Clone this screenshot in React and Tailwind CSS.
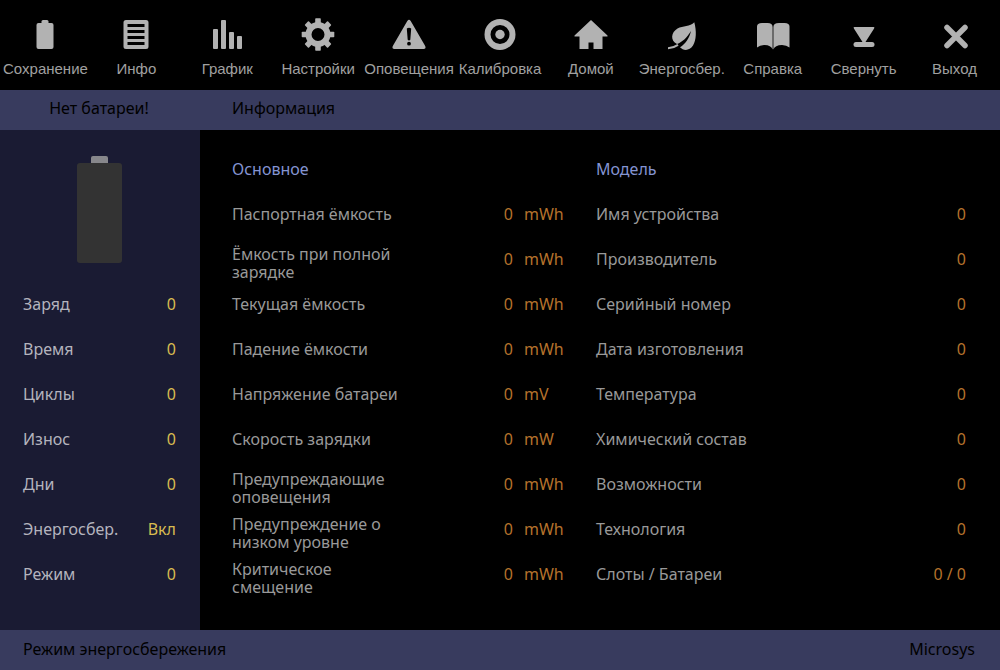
import React from 'react';
import { clsx } from 'clsx';

const icons = {
  battery: (
    <>
      <rect x="9.500" y="5" width="17" height="26" rx="2" />
      <rect x="14.500" y="2" width="7" height="5" rx="1.500" />
    </>
  ),
  info: (
    <path
      fillRule="evenodd"
      d="M8 2h20q2.500 0 2.500 2.500v24q0 2.500-2.500 2.500H8q-2.500 0-2.500-2.500v-24Q5.500 2 8 2zM9.500 6v3h17V6zM9.500 12v3h17v-3zM9.500 18v3h17v-3zM9.500 24v3h17v-3z"
    />
  ),
  chart: (
    <>
      <rect x="4" y="11" width="5" height="20" rx="1" />
      <rect x="12" y="2" width="5" height="29" rx="1" />
      <rect x="20" y="14" width="5" height="17" rx="1" />
      <rect x="28" y="18" width="5" height="13" rx="1" />
    </>
  ),
  gear: (
    <>
      <circle cx="18" cy="16.500" r="9.500" fill="none" stroke="currentColor" strokeWidth="6" />
      {[0, 45, 90, 135].map((angle) => (
        <g key={angle} transform={`rotate(${angle} 18 16.5)`}>
          <rect x="15.200" y="0.200" width="5.600" height="6" rx="0.800" />
          <rect x="15.200" y="26.800" width="5.600" height="6" rx="0.800" />
        </g>
      ))}
    </>
  ),
  alert: (
    <path
      fillRule="evenodd"
      d="M16.3 3q1.7-2.4 3.4 0L34.2 28q1.2 3-1.7 3h-29q-2.9 0-1.7-3zM15.800 10.600l.9 11.200q1.300 1.400 2.600 0l.9-11.200q-2.200-1.800-4.400 0zM18 23.800a1.900 1.900 0 1 0 0 3.800 1.900 1.900 0 1 0 0-3.800z"
    />
  ),
  target: (
    <>
      <circle cx="18" cy="16.500" r="12.500" fill="none" stroke="currentColor" strokeWidth="6" />
      <circle cx="18" cy="16.500" r="4.700" />
    </>
  ),
  home: <path d="M18 2l16.500 15.500v1h-5V31h-9v-6.500h-5V31h-9V18.500h-5v-1z" />,
  leaf: (
    <>
      <path d="M30.300 4.300C32.600 13 32.400 22 29 27.500 25.500 33 19.500 33 16 29.300 21.500 26 25.500 20 27 13 22.500 20 18.500 24 13 26 6 22.500 7 14.500 13.500 10.500 19 7.500 26 9 30.300 4.300z" />
      <path d="M4 30.200Q9 30.200 14 26.800" fill="none" stroke="currentColor" strokeWidth="2" />
    </>
  ),
  book: (
    <>
      <path d="M2 8.500Q2 5 7 5h5.500q5.100 0 5.100 4v22.500Q16 27 9.500 27 5 27 2 29.500z" />
      <path d="M34.500 8.500Q34.500 5 29.500 5H24q-5.600 0-5.600 4v22.500Q20 27 27 27q4.500 0 7.500 2.500z" />
    </>
  ),
  minimize: (
    <>
      <path d="M8.500 9h19q1.500 0 .6 1.400L19.500 24h-3L7.900 10.400Q7 9 8.500 9z" />
      <rect x="7.500" y="24" width="21" height="5" rx="2.500" />
    </>
  ),
  close: (
    <path d="M10 9.500l18 18M28 9.500l-18 18" fill="none" stroke="currentColor" strokeWidth="5.500" strokeLinecap="round" />
  ),
};

const toolbar = [
  { icon: 'battery', label: 'Сохранение' },
  { icon: 'info', label: 'Инфо' },
  { icon: 'chart', label: 'График' },
  { icon: 'gear', label: 'Настройки' },
  { icon: 'alert', label: 'Оповещения' },
  { icon: 'target', label: 'Калибровка' },
  { icon: 'home', label: 'Домой' },
  { icon: 'leaf', label: 'Энергосбер.' },
  { icon: 'book', label: 'Справка' },
  { icon: 'minimize', label: 'Свернуть' },
  { icon: 'close', label: 'Выход' },
];

const status = [
  ['Заряд', '0'],
  ['Время', '0'],
  ['Циклы', '0'],
  ['Износ', '0'],
  ['Дни', '0'],
  ['Энергосбер.', 'Вкл'],
  ['Режим', '0'],
];

const general = [
  ['Паспортная ёмкость', '0', 'mWh'],
  ['Ёмкость при полной зарядке', '0', 'mWh'],
  ['Текущая ёмкость', '0', 'mWh'],
  ['Падение ёмкости', '0', 'mWh'],
  ['Напряжение батареи', '0', 'mV'],
  ['Скорость зарядки', '0', 'mW'],
  ['Предупреждающие оповещения', '0', 'mWh'],
  ['Предупреждение о низком уровне', '0', 'mWh'],
  ['Критическое смещение', '0', 'mWh'],
];

const model = [
  ['Имя устройства', '0'],
  ['Производитель', '0'],
  ['Серийный номер', '0'],
  ['Дата изготовления', '0'],
  ['Температура', '0'],
  ['Химический состав', '0'],
  ['Возможности', '0'],
  ['Технология', '0'],
  ['Слоты / Батареи', '0 / 0'],
];

function ToolButton({ icon, label }) {
  return (
    <button className="flex flex-col items-center pt-[18px] text-[#b2b2b2]">
      <svg viewBox="0 0 36 36" className="h-9 w-9" fill="currentColor" aria-hidden="true">
        {icons[icon]}
      </svg>
      <span className="mt-1.5 font-['Liberation_Sans',Arial,sans-serif] text-[15px] leading-[18px] whitespace-nowrap text-[#a0a0a0]">
        {label}
      </span>
    </button>
  );
}

function Sidebar() {
  return (
    <aside className="w-[200px] shrink-0 bg-[#1a1b33] pt-[26px]">
      <div className="flex flex-col items-center pr-px">
        <div className="h-[7px] w-[17px] rounded-t-xs bg-[#87878b]" />
        <div className="h-[100px] w-[45px] rounded-[3px] bg-[#333333]" />
      </div>
      <table className="mt-[18px] w-full">
        <tbody>
          {status.map(([name, value]) => (
            <tr key={name} className="h-[45px]">
              <th scope="row" className="p-0 pl-[23px] text-left font-normal text-[#b4b4be]">
                {name}
              </th>
              <td className="p-0 pr-6 text-right text-[#d8bc50]">{value}</td>
            </tr>
          ))}
        </tbody>
      </table>
    </aside>
  );
}

function InfoTable({ title, rows }) {
  return (
    <table className="w-full">
      <caption className="h-[45px] pt-0.5 text-left leading-[43px] text-[#8494d2]">{title}</caption>
      <tbody>
        {rows.map(([name, value, unit]) => (
          <tr key={name} className="h-[45px]">
            {/* names over 18 letters take two lines, which sit lower in the row */}
            <th
              scope="row"
              className={clsx('w-[172px] p-0 text-left font-normal text-[#999999]', name.length > 18 && 'pt-2')}
            >
              {name}
            </th>
            <td className="p-0 text-right text-[#b5722c]">{value}</td>
            {unit && <td className="w-[83px] p-0 pl-[11px] text-left text-[#b5722c]">{unit}</td>}
          </tr>
        ))}
      </tbody>
    </table>
  );
}

export default function App() {
  return (
    <div className="flex min-h-screen flex-col bg-black font-['Noto_Sans',Verdana,sans-serif] text-[16px] leading-[18px]">
      <nav className="grid h-[90px] grid-cols-11 items-start">
        {toolbar.map((item) => (
          <ToolButton key={item.icon} {...item} />
        ))}
      </nav>
      <header className="flex h-10 items-center bg-[#383b5e] pb-1 text-black">
        <div className="w-[200px] shrink-0 pr-0.5 text-center">Нет батареи!</div>
        <h1 className="pl-8">Информация</h1>
      </header>
      <div className="flex flex-1">
        <Sidebar />
        <main className="flex flex-1 pt-4">
          <section className="w-[49.5%] pl-8">
            <InfoTable title="Основное" rows={general} />
          </section>
          <section className="flex-1 pr-[34px]">
            <InfoTable title="Модель" rows={model} />
          </section>
        </main>
      </div>
      <footer className="flex h-10 items-center justify-between bg-[#383b5e] pr-[25px] pb-0.5 pl-[23px] text-black">
        <span>Режим энергосбережения</span>
        <span>Microsys</span>
      </footer>
    </div>
  );
}
